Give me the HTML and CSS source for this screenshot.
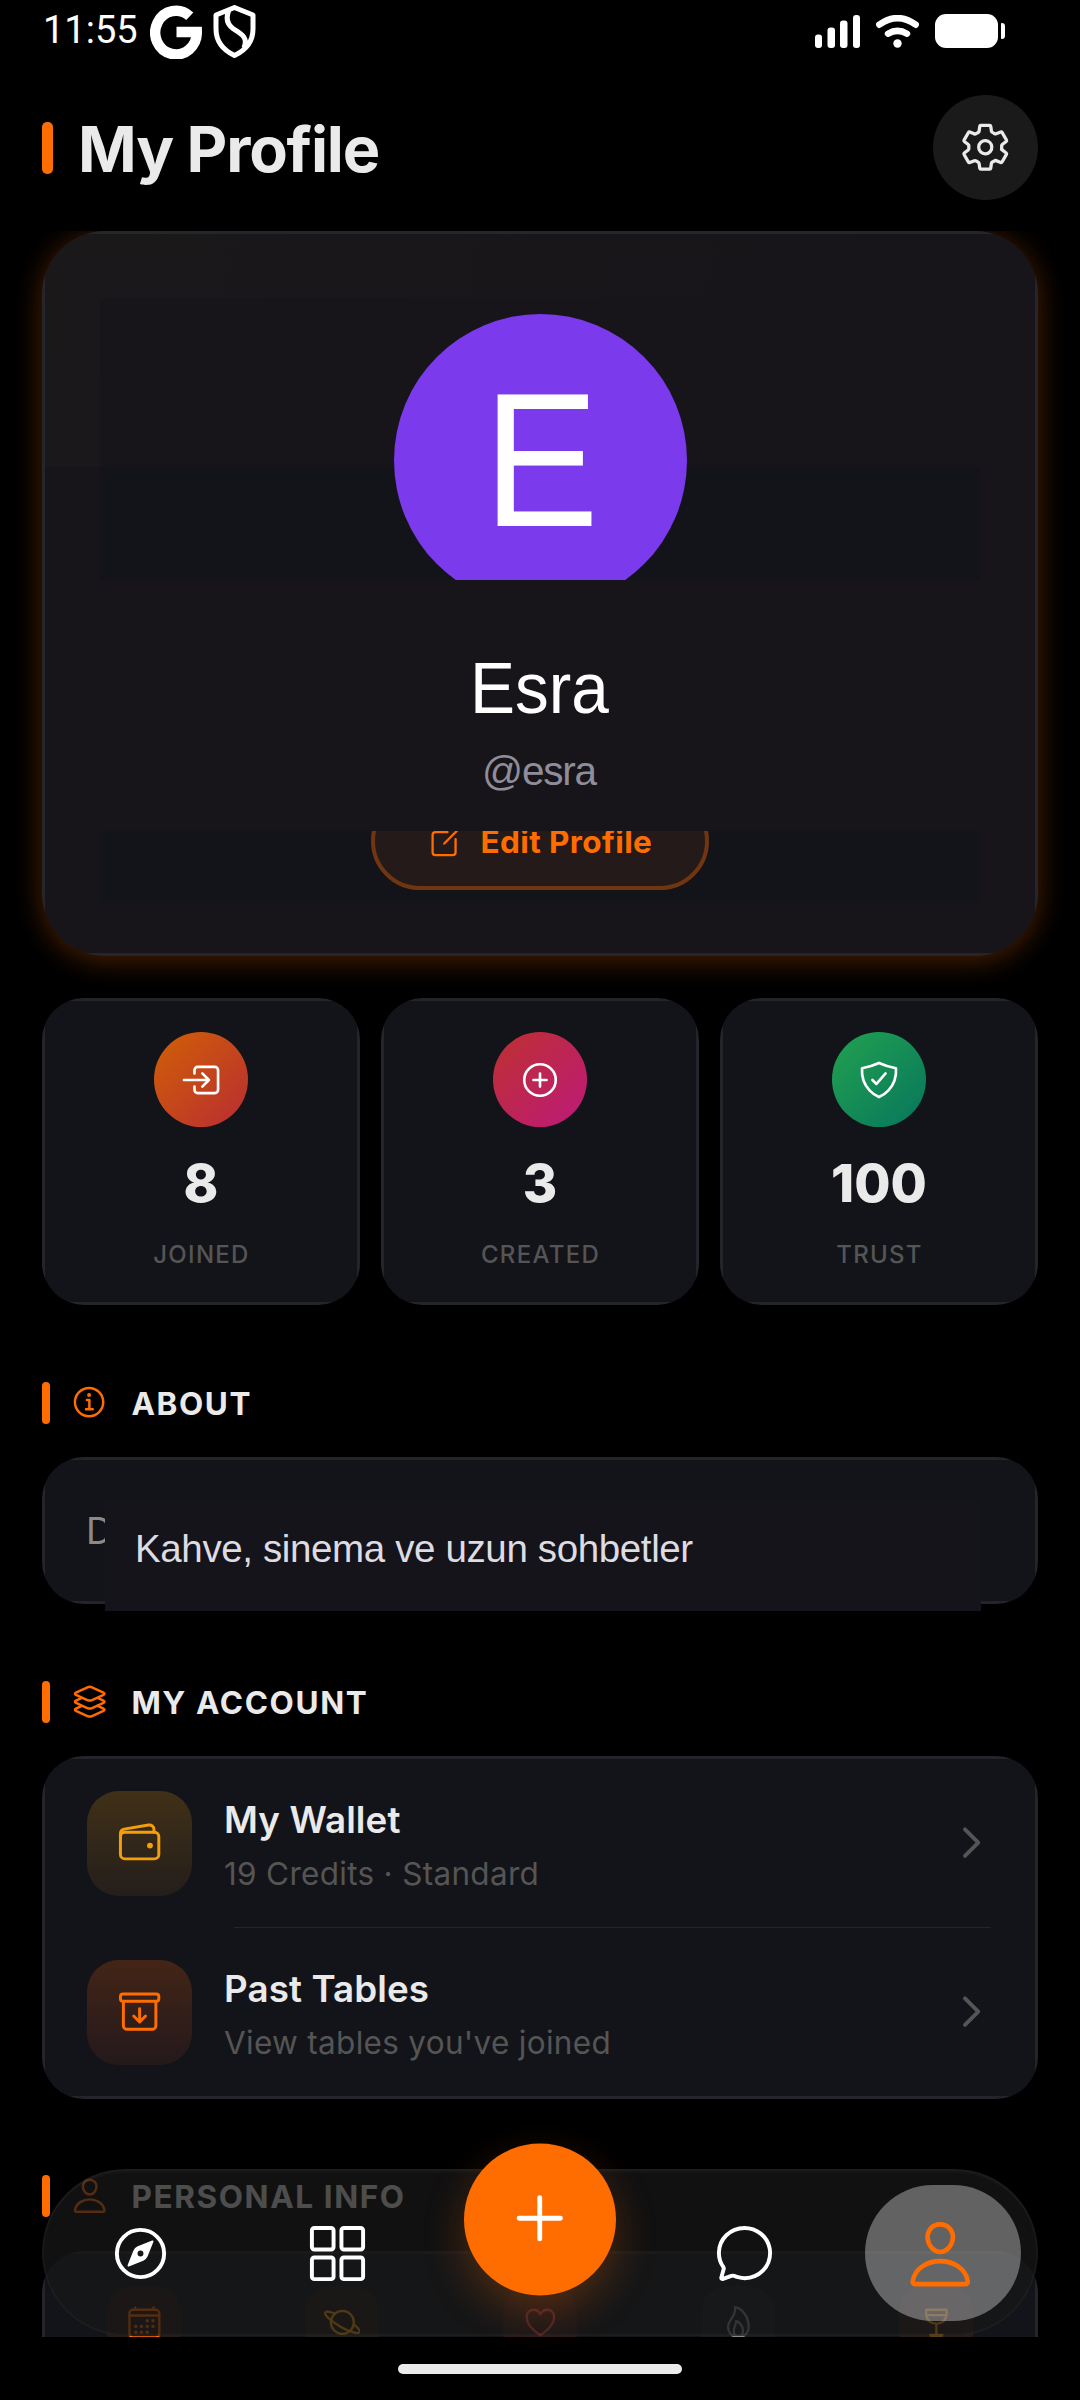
FILE: index.html
```html
<!DOCTYPE html>
<html lang="en">
<head>
<meta charset="utf-8">
<title>My Profile</title>
<link rel="stylesheet" href="styles.css">
</head>
<body>
<div class="screen">
  <div class="status">
    <div class="status-left">
      <span class="clock">11:55</span>
      <svg class="g-logo" viewBox="0 0 52 54"><path d="M39.800 11.300A20.800 21.800 0 1 0 46.800 27H26.500" fill="none" stroke="#fff" stroke-width="10.400"/></svg>
      <svg class="s-logo" viewBox="0 0 43 53"><path d="M21.500 2.500L40 10V24C40 36 33 45 21.500 50.500C10 45 3 36 3 24V10Z M16 5C12 14 15 20 20.500 24C30 30 35 33 31 43" fill="none" stroke="#fff" stroke-width="5" stroke-linejoin="round"/></svg>
    </div>
    <div class="status-right">
      <svg class="signal" viewBox="0 0 45 33" fill="#fff"><rect y="19.500" width="7" height="13.500" rx="3"/><rect x="12.500" y="12.500" width="7.500" height="20.500" rx="3"/><rect x="25" y="5.500" width="7.500" height="27.500" rx="3"/><rect x="38" width="7" height="33" rx="3"/></svg>
      <svg class="wifi" viewBox="0 0 43 33" fill="none" stroke="#fff" stroke-width="6.500" stroke-linecap="round"><path d="M3.300 9.700Q21.500-3.500 39.700 9.700M12 18.700Q21.500 13 31 18.700"/><circle cx="21.500" cy="28.500" r="4.200" fill="#fff" stroke="none"/></svg>
      <div class="battery"></div><div class="battery-tip"></div>
    </div>
  </div>

  <header class="header">
    <span class="header-bar"></span>
    <h1>My Profile</h1>
    <div class="settings">
      <svg class="ico" viewBox="0 0 512 512"><path d="M262.290 192.310a64 64 0 1057.400 57.400 64.130 64.130 0 00-57.400-57.400zM416.390 256a154.340 154.340 0 01-1.530 20.790l45.210 35.460a10.810 10.810 0 012.450 13.750l-42.770 74a10.810 10.810 0 01-13.140 4.590l-44.900-18.080a16.110 16.110 0 00-15.170 1.750A164.480 164.480 0 01325 400.800a15.940 15.940 0 00-8.820 12.140l-6.730 47.890a11.080 11.080 0 01-10.680 9.170h-85.540a11.110 11.110 0 01-10.690-8.870l-6.720-47.820a16.070 16.070 0 00-9-12.220 155.300 155.300 0 01-21.460-12.570 16 16 0 00-15.110-1.710l-44.890 18.070a10.810 10.810 0 01-13.140-4.580l-42.770-74a10.800 10.800 0 012.450-13.750l38.210-30a16.050 16.050 0 006-14.080c-.36-4.170-.58-8.330-.58-12.500s.21-8.270.58-12.350a16 16 0 00-6.070-13.940l-38.190-30A10.810 10.810 0 0149.480 186l42.770-74a10.810 10.810 0 0113.140-4.590l44.900 18.080a16.110 16.110 0 0015.170-1.750A164.480 164.480 0 01187 111.200a15.940 15.940 0 008.820-12.140l6.730-47.890A11.080 11.080 0 01213.230 42h85.540a11.110 11.110 0 0110.690 8.870l6.720 47.820a16.070 16.070 0 009 12.220 155.300 155.300 0 0121.460 12.570 16 16 0 0015.110 1.710l44.890-18.070a10.810 10.810 0 0113.140 4.580l42.770 74a10.800 10.800 0 01-2.450 13.750l-38.210 30a16.050 16.050 0 00-6.050 14.080c.33 4.140.55 8.300.55 12.470z"/></svg>
    </div>
  </header>

  <main class="content">
    <section class="profile">
      <div class="stage"><div class="avatar"><span>E</span></div></div>
      <div class="identity"><div class="name">Esra</div><div class="handle">@esra</div></div>
      <div class="action">
        <div class="edit">
          <svg class="ico" viewBox="0 0 512 512"><path d="M384 224v184a40 40 0 01-40 40H104a40 40 0 01-40-40V168a40 40 0 0140-40h167.480"/><path class="solid" d="M459.940 53.250a16.060 16.060 0 00-23.220-.56L424.350 65a8 8 0 000 11.310l11.340 11.320a8 8 0 0011.340 0l12.060-12c6.100-6.090 6.670-16.010.85-22.380zM399.340 90L218.820 270.200a9 9 0 00-2.310 3.930L208.160 299a3.910 3.910 0 004.860 4.860l24.850-8.350a9 9 0 003.930-2.310L422 112.660a9 9 0 000-12.660l-9.950-10a9 9 0 00-12.710 0z"/></svg>
          <span>Edit Profile</span>
        </div>
      </div>
    </section>

    <section class="stats">
      <div class="card stat">
        <div class="badge joined"><svg class="ico" viewBox="0 0 512 512"><path d="M176 176v-40a40 40 0 0140-40h208a40 40 0 0140 40v240a40 40 0 01-40 40H216a40 40 0 01-40-40v-40M272 336l80-80-80-80M48 256h288"/></svg></div>
        <div class="number">8</div><div class="label">JOINED</div>
      </div>
      <div class="card stat">
        <div class="badge created"><svg class="ico" viewBox="0 0 512 512"><circle cx="256" cy="256" r="192"/><path d="M256 176v160M336 256H176"/></svg></div>
        <div class="number">3</div><div class="label">CREATED</div>
      </div>
      <div class="card stat">
        <div class="badge trust"><svg class="ico" viewBox="0 0 512 512"><path d="M336 176L225.200 304 176 255.800M463.100 112.370C373.680 96.330 336.710 84.450 256 48c-80.710 36.450-117.680 48.330-207.100 64.370C32.700 369.130 240.580 457.790 256 464c15.420-6.210 223.300-94.870 207.100-351.630z"/></svg></div>
        <div class="number">100</div><div class="label">TRUST</div>
      </div>
    </section>

    <h2 class="section-head"><i class="bar"></i>
      <svg class="ico" viewBox="0 0 512 512"><circle cx="248" cy="248" r="184"/><path d="M220 220h32v116M208 340h88"/><circle class="solid" cx="248" cy="156" r="26"/></svg>
      <span>ABOUT</span></h2>
    <section class="card about">
      <span class="about-initial">D</span>
      <div class="about-text">Kahve, sinema ve uzun sohbetler</div>
    </section>

    <h2 class="section-head"><i class="bar"></i>
      <svg class="ico" viewBox="0 0 512 512"><path d="M434.800 137.650l-149.360-68.100c-16.190-7.400-42.690-7.400-58.880 0L77.300 137.650c-17.600 8-17.600 21.090 0 29.090l148 67.500c16.890 7.700 44.690 7.700 61.580 0l148-67.500c17.520-8 17.520-21.100-.08-29.090zM160 308.520l-82.700 37.110c-17.600 8-17.600 21.100 0 29.100l148 67.500c16.890 7.690 44.690 7.690 61.580 0l148-67.500c17.600-8 17.600-21.100 0-29.100l-79.940-38.470M160 204.480l-82.800 37.160c-17.600 8-17.600 21.100 0 29.100l148 67.490c16.890 7.700 44.690 7.700 61.580 0l148-67.490c17.700-8 17.700-21.100.1-29.100L352 204.480"/></svg>
      <span>MY ACCOUNT</span></h2>
    <section class="card account">
      <div class="row">
        <div class="tile wallet"><svg class="ico" viewBox="0 0 512 512"><rect x="48" y="144" width="416" height="288" rx="48"/><path d="M411.360 144v-30A50 50 0 00352 64.900L88.640 109.850A50 50 0 0048 159v49"/><circle class="solid" cx="368" cy="288" r="32"/></svg></div>
        <div class="row-text"><div class="row-title">My Wallet</div><div class="row-sub">19 Credits · Standard</div></div>
        <svg class="ico chevron" viewBox="0 0 512 512"><path d="M184 112l144 144-144 144"/></svg>
      </div>
      <div class="divider"></div>
      <div class="row">
        <div class="tile past"><svg class="ico" viewBox="0 0 512 512"><path d="M80 152v256a40.120 40.120 0 0040 40h272a40.120 40.120 0 0040-40V152"/><rect x="48" y="64" width="416" height="80" rx="28"/><path d="M320 304l-64 64-64-64M256 345.890V224"/></svg></div>
        <div class="row-text"><div class="row-title">Past Tables</div><div class="row-sub">View tables you've joined</div></div>
        <svg class="ico chevron" viewBox="0 0 512 512"><path d="M184 112l144 144-144 144"/></svg>
      </div>
    </section>

    <h2 class="section-head personal-head"><i class="bar"></i>
      <svg class="ico" viewBox="0 0 512 512"><path d="M344 144c-3.920 52.870-44 96-88 96s-84.150-43.120-88-96c-4-55 35-96 88-96s92 42 88 96zM256 304c-87 0-175.300 48-191.640 138.600C62.390 453.520 68.570 464 80 464h352c11.440 0 17.620-10.480 15.650-21.400C431.300 352 343 304 256 304z"/></svg>
      <span>PERSONAL INFO</span></h2>
    <section class="card personal">
      <div class="chip orange"><svg class="ico" viewBox="0 0 512 512"><rect x="48" y="80" width="416" height="384" rx="48"/><path d="M128 48v32M384 48v32M464 160H48"/><g class="solid"><circle cx="296" cy="232" r="24"/><circle cx="376" cy="232" r="24"/><circle cx="296" cy="312" r="24"/><circle cx="376" cy="312" r="24"/><circle cx="136" cy="312" r="24"/><circle cx="216" cy="312" r="24"/><circle cx="136" cy="392" r="24"/><circle cx="216" cy="392" r="24"/><circle cx="296" cy="392" r="24"/></g></svg></div>
      <div class="chip amber"><svg class="ico" viewBox="0 0 512 512"><path d="M413.480 284.460c58.870 47.240 91.610 89 80.310 108.550-17.850 30.850-138.780-5.480-270.100-81.150S.37 149.840 18.210 119c11.160-19.280 62.580-12.320 131.640 14.090"/><circle cx="256" cy="256" r="160"/></svg></div>
      <div class="chip red"><svg class="ico" viewBox="0 0 512 512"><path d="M352.920 80C288 80 256 144 256 144s-32-64-96.920-64c-52.760 0-94.540 44.140-95.080 96.810-1.100 109.330 86.730 187.080 183 252.420a16 16 0 0018 0c96.260-65.340 184.090-143.090 183-252.420-.54-52.670-42.320-96.810-95.080-96.810z"/></svg></div>
      <div class="chip grey"><svg class="ico" viewBox="0 0 512 512"><path d="M112 320c0-93 124-165 96-272 66 0 192 96 192 272a144 144 0 01-288 0zM320 368c0 57.710-32 80-64 80s-64-22.290-64-80 40-86 32-128c42 0 96 70.290 96 128z"/></svg></div>
      <div class="chip wine"><svg class="ico" viewBox="0 0 512 512"><path d="M398.570 80H113.430v16S87.510 272 256 272 398.570 96 398.570 96zM256 272v160M172 432h168M116 156h280"/></svg></div>
    </section>
  </main>

  <footer class="footer"><div class="home-indicator"></div></footer>

  <nav class="nav">
    <div class="nav-item"><svg class="ico" viewBox="0 0 512 512"><circle cx="256" cy="256" r="192"/><path class="solid" fill-rule="evenodd" d="M350.670 150.930l-117.200 46.880a64 64 0 00-35.660 35.660l-46.880 117.200a8 8 0 0010.400 10.400l117.200-46.880a64 64 0 0035.660-35.660l46.880-117.200a8 8 0 00-10.400-10.400zM256 280a24 24 0 1124-24 24 24 0 01-24 24z"/></svg></div>
    <div class="nav-item"><svg class="ico" viewBox="0 0 512 512"><rect x="48" y="48" width="176" height="176" rx="20"/><rect x="288" y="48" width="176" height="176" rx="20"/><rect x="48" y="288" width="176" height="176" rx="20"/><rect x="288" y="288" width="176" height="176" rx="20"/></svg></div>
    <div class="nav-item"><div class="fab"><svg class="ico" viewBox="0 0 512 512"><path d="M256 112v288M400 256H112"/></svg></div></div>
    <div class="nav-item"><svg class="ico" viewBox="0 0 512 512"><path d="M87.480 380c1.200-4.380-1.430-10.470-3.940-14.860a42.630 42.630 0 00-2.540-3.800 199.810 199.810 0 01-33-110C47.640 139.090 140.720 48 255.820 48 356.200 48 440 117.540 459.570 209.850a199 199 0 014.430 41.640c0 112.410-89.490 204.930-204.590 204.930-18.310 0-43-4.600-56.470-8.370s-26.920-8.770-30.390-10.110a31.140 31.140 0 00-11.130-2.070 30.700 30.700 0 00-12.080 2.430L81.500 462.780a15.920 15.920 0 01-4.660 1.220 9.610 9.610 0 01-9.580-9.740 15.850 15.850 0 01.6-3.290z"/></svg></div>
    <div class="nav-item active"><div class="pill"><svg class="ico" viewBox="0 0 512 512"><path d="M344 144c-3.920 52.870-44 96-88 96s-84.150-43.120-88-96c-4-55 35-96 88-96s92 42 88 96zM256 304c-87 0-175.300 48-191.640 138.600C62.390 453.520 68.570 464 80 464h352c11.440 0 17.620-10.480 15.650-21.400C431.300 352 343 304 256 304z"/></svg></div></div>
  </nav>
</div>
</body>
</html>
```
FILE: styles.css
```css
* { box-sizing: border-box; }
body { margin: 0; background: #000; font-family: Inter, sans-serif; }
h1, h2 { margin: 0; }

.screen {
  position: relative;
  display: flex;
  flex-direction: column;
  width: 1080px;
  height: 2400px;
  overflow: hidden;
  background: #000;
}

.ico {
  display: block;
  flex: none;
  fill: none;
  stroke: currentColor;
  stroke-width: 32;
  stroke-linecap: round;
  stroke-linejoin: round;
}
.ico .solid { fill: currentColor; stroke: none; }

/* Status bar */
.status {
  display: flex;
  justify-content: space-between;
  height: 95px;
  padding: 5px 75px 0 43px;
}
.status-left, .status-right { display: flex; align-items: flex-start; }
.clock {
  width: 107px;
  padding-top: 3px;
  color: #fff;
  font: 400 38px/44px Roboto, sans-serif;
}
.g-logo { width: 52px; height: 54px; margin-right: 11px; }
.s-logo { width: 43px; height: 53px; }
.signal { width: 45px; height: 33px; margin: 10px 16px 0 0; }
.wifi { width: 43px; height: 33px; margin: 10px 16px 0 0; }
.battery { width: 63px; height: 34px; margin: 9px 3px 0 0; border-radius: 11px; background: #fff; }
.battery-tip { width: 4px; height: 16px; margin-top: 18px; border-radius: 1px 4px 4px 1px; background: #fff; }

/* Header */
.header { display: flex; align-items: center; height: 136px; padding: 0 42px 31px; }
.header-bar { width: 11px; height: 52px; border-radius: 5px; background: #ff6d00; }
.header h1 {
  flex: 1;
  margin-left: 25px;
  padding-top: 3px;
  color: #eaeaea;
  font-size: 63px;
  line-height: 76px;
  font-weight: 700;
  letter-spacing: -1.200px;
}
.settings {
  display: flex;
  align-items: center;
  justify-content: center;
  width: 105px;
  height: 105px;
  border-radius: 50%;
  background: #1a1a1a;
  color: #eaeaea;
}
.settings .ico { width: 52.500px; height: 52.500px; }

/* Scroll area */
.content { height: 2106px; flex: none; padding: 0 42px; overflow: hidden; }

.card {
  border-radius: 42px;
  background: linear-gradient(#131419, #131419) 3px 3px / calc(100% - 6px) calc(100% - 6px) no-repeat, #24252b;
}

.profile {
  height: 725px;
  padding: 67px 58px 53px;
  border-radius: 63px;
  background:
    linear-gradient(100deg, #1b181a, #18151a 80%) 3px 3px / calc(100% - 6px) 233px no-repeat,
    linear-gradient(#17151a, #17151a) 3px 3px / calc(100% - 6px) calc(100% - 6px) no-repeat,
    #27252c;
  box-shadow: 0 4px 28px rgba(255, 109, 0, .3);
}
.stage {
  display: flex;
  justify-content: center;
  height: 282px;
  padding-top: 16px;
  overflow: hidden;
  background: linear-gradient(#17151a 169px, #131419 169px);
}
.avatar {
  display: flex;
  align-items: center;
  justify-content: center;
  flex: none;
  width: 293px;
  height: 293px;
  border-radius: 50%;
  background: #7c3aed;
}
.avatar span {
  color: #fff;
  font: 400 192px/198px "Liberation Sans", Arial, sans-serif;
  transform: translate(1px, -1px) scaleX(.9);
}
.identity {
  height: 251px;
  padding-top: 68px;
  text-align: center;
  font-family: "Liberation Sans", Arial, sans-serif;
}
.name { color: #fff; font-size: 73px; line-height: 80px; transform: translateX(-.5px) scaleX(.925); }
.handle { margin: 18px 2px 0 0; color: #8f8d99; font-size: 40.500px; line-height: 50px; letter-spacing: -1.200px; }
.action {
  display: flex;
  justify-content: center;
  height: 72px;
  overflow: hidden;
  background: #131419;
}
.edit {
  display: flex;
  align-items: center;
  justify-content: center;
  gap: 16px;
  width: 338px;
  height: 98px;
  margin-top: -39px;
  border: 4px solid #713611;
  border-radius: 49px;
  background: #241a1a;
  color: #ff6d00;
  font-size: 31.500px;
  font-weight: 700;
  letter-spacing: .4px;
}
.edit .ico { width: 36.750px; height: 36.750px; }

/* Stats */
.stats { display: grid; grid-template-columns: repeat(3, 1fr); gap: 21px; margin-top: 42px; }
.stat { display: flex; flex-direction: column; align-items: center; height: 307px; padding-top: 34px; }
.badge {
  display: flex;
  align-items: center;
  justify-content: center;
  width: 94px;
  height: 95px;
  border-radius: 50%;
  color: #fff;
}
.badge .ico { width: 42px; height: 42px; }
.joined { background: linear-gradient(135deg, #d06006, #b92c32); }
.created { background: linear-gradient(135deg, #bd3030, #bd1a7a); }
.trust { background: linear-gradient(135deg, #22a250, #07755c); }
.number { margin-top: 24px; color: #eaeaea; font-size: 52.500px; line-height: 64px; font-weight: 800; }
.label { margin: 25px 0 0 1px; color: #555; font-size: 24px; line-height: 30px; font-weight: 450; letter-spacing: 1.300px; }

/* Sections */
.section-head {
  display: flex;
  align-items: center;
  height: 42px;
  margin: 77px 0 33px;
  color: #eaeaea;
  font-size: 31.500px;
  line-height: 42px;
  font-weight: 700;
  letter-spacing: 1.600px;
}
.section-head .bar { width: 8px; height: 42px; margin-right: 20px; border-radius: 4px; background: #ff6d00; }
.section-head .ico { width: 39.400px; height: 39.400px; margin-right: 22px; color: #ff6d00; }
.section-head span { padding-top: 1px; }
.personal-head { margin: 76px 0 34px; }

.about { position: relative; height: 147px; padding: 45px 0 0 44px; }
.about-initial {
  display: block;
  color: #8a8a8a;
  font-size: 36.750px;
  line-height: 58px;
}
.about-text {
  position: absolute;
  left: 63px;
  top: 43px;
  width: 876px;
  height: 111px;
  padding: 24px 0 0 30px;
  background: #15141a;
  color: #dddce3;
  font: 400 38.500px/50px "Liberation Sans", Arial, sans-serif;
  letter-spacing: -.37px;
}

.account { height: 343px; padding: 3px; }
.row { display: flex; align-items: center; height: 168px; padding: 0 40px 0 42px; }
.tile {
  display: flex;
  align-items: center;
  justify-content: center;
  width: 105px;
  height: 105px;
  border-radius: 32px;
}
.tile .ico { width: 47.250px; height: 47.250px; }
.wallet { background: linear-gradient(#403017, #241e1b); color: #f59e0b; }
.past { background: linear-gradient(#432516, #24191b); color: #ff6d00; }
.row-text { flex: 1; margin-left: 32px; padding-top: 3px; }
.row-title { color: #eaeaea; font-size: 36.750px; line-height: 48px; font-weight: 600; letter-spacing: .1px; }
.row-sub { margin-top: 10px; color: #555; font-size: 31.500px; line-height: 40px; letter-spacing: .3px; }
.chevron { width: 47.250px; height: 47.250px; color: #555; stroke-width: 42; }
.divider { height: 1px; margin: 0 44px 0 189px; background: #24252a; }

.personal { display: grid; grid-template-columns: repeat(5, 198px); justify-content: center; justify-items: center; height: 240px; padding-top: 35px; }
.chip {
  display: flex;
  align-items: center;
  justify-content: center;
  width: 73.500px;
  height: 73.500px;
  border-radius: 26px;
}
.chip .ico { width: 36.750px; height: 36.750px; }
.orange { background: #2a1b18; color: #ff6d00; }
.amber { background: #221e19; color: #f5a00b; }
.red { background: #2a1a1e; color: #ef4444; }
.grey { background: #1b1c22; color: #8a8a8a; }
.wine { background: #281f1a; color: #f59e0b; }

/* Bottom */
.footer { display: flex; justify-content: center; height: 63px; padding-top: 27px; }
.home-indicator { width: 284px; height: 10px; border-radius: 5px; background: #ebebeb; }

.nav {
  position: absolute;
  left: 42px;
  top: 2169px;
  display: grid;
  grid-template-columns: 197px 196px 210px 199px 194px;
  align-items: center;
  justify-items: center;
  width: 996px;
  height: 167px;
  border-radius: 84px;
  background: rgba(23, 23, 23, .744);
  box-shadow: inset 0 0 0 2px rgba(255, 255, 255, .03), inset 0 5px 0 -1px rgba(255, 255, 255, .02);
  color: #fff;
}
.nav-item .ico { width: 63px; height: 63px; transform: translateY(1px); }
.fab {
  display: flex;
  align-items: center;
  justify-content: center;
  width: 152px;
  height: 152px;
  border-radius: 50%;
  background: #ff6d00;
  box-shadow: 0 16px 42px rgba(255, 109, 0, .25);
  transform: translateY(-33.500px);
}
.nav-item .fab .ico, .nav-item .pill .ico { width: 73.500px; height: 73.500px; }
.nav-item .fab .ico { transform: translateY(-1px); stroke-width: 34; }
.pill {
  display: flex;
  align-items: center;
  justify-content: center;
  width: 156px;
  height: 136px;
  margin-left: 4px;
  border-radius: 68px;
  background: rgba(255, 255, 255, .34);
  color: #ff6d00;
}
.nav-item .pill .ico { transform: translate(-2.500px, 1.500px); }
```
